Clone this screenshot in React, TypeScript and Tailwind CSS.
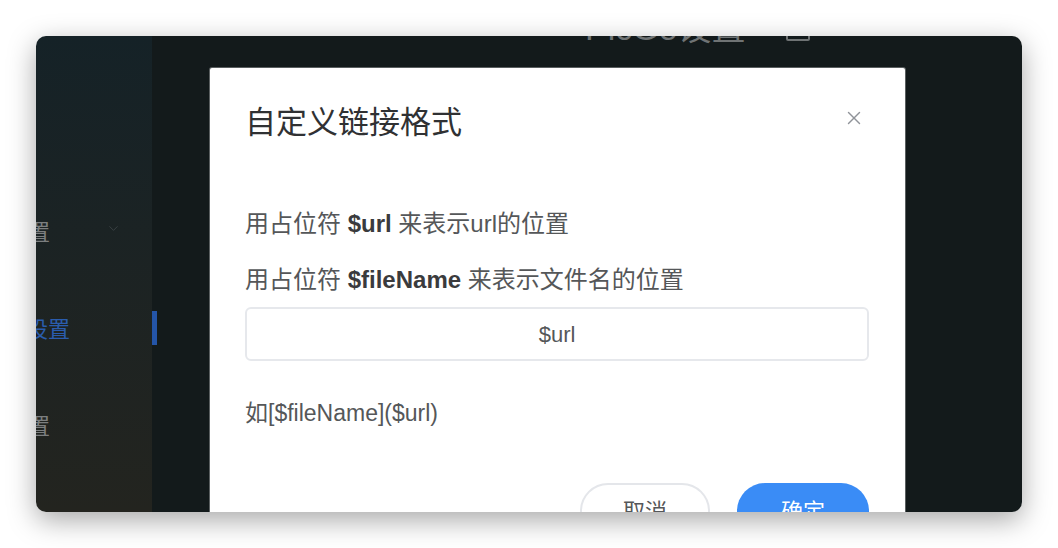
import { X, ChevronDown } from 'lucide-react';

const font = { fontFamily: '"Liberation Sans", "Noto Sans CJK SC", sans-serif' };

function SideItem({ label, offset, active }: { label: string; offset: string; active?: boolean }) {
  return (
    <div className={`h-[97px] flex items-center whitespace-nowrap text-[22px] ${active ? 'text-[#2a5cad]' : 'text-[#7c7f80]'}`}>
      <span className={offset}>{label}</span>
    </div>
  );
}

export default function App() {
  return (
    <div className="w-[1058px] h-[548px] bg-white p-[36px]" style={font}>
      <div className="relative w-[986px] h-[476px] rounded-[10px] overflow-hidden flex shadow-[0_8px_28px_rgba(0,0,0,0.35)]">
        <aside className="relative w-[116px] shrink-0 bg-linear-to-b from-[#152227] to-[#23241f] overflow-hidden pt-[148px]">
          <SideItem label="图床设置" offset="ml-[-74px]" />
          <SideItem label="图床设置" offset="ml-[-54px]" active />
          <SideItem label="软件设置" offset="ml-[-74px]" />
          <ChevronDown className="absolute left-[70px] top-[185px] text-[#3b4244]" size={15} strokeWidth={1.5} />
        </aside>
        <div className="w-[5px] shrink-0 bg-[#131a1b] pt-[275px]">
          <div className="h-[34px] bg-[#2455a8]" />
        </div>
        <main className="flex-1 bg-[#131a1b]">
          <div className="flex items-center gap-[40px] -mt-[24px] ml-[428px] text-[#6f7374]">
            <span className="text-[34px] leading-[32px]">PicGo设置</span>
            <span className="w-[24px] h-[26px] border-2 border-[#6f7374] rounded-[2px]" />
          </div>
        </main>

        <div className="absolute left-[174px] top-[32px] w-[695px] h-[480px] bg-white ring-1 ring-[#5a5f60] rounded-t-[2px] pl-[35px] pr-[36px] pt-[34px]">
          <div className="flex items-center justify-between">
            <h2 className="text-[31px] leading-[42px] text-[#303133]">自定义链接格式</h2>
            <X className="text-[#909399] mr-[4px] -mt-[10px]" size={22} strokeWidth={1.5} />
          </div>
          <p className="mt-[65px] text-[24px] leading-[30px] text-[#555759]">
            用占位符 <b className="text-[#3a3b3d]">$url</b> 来表示url的位置
          </p>
          <p className="mt-[26px] text-[24px] leading-[30px] text-[#555759]">
            用占位符 <b className="text-[#3a3b3d]">$fileName</b> 来表示文件名的位置
          </p>
          <div className="mt-[12px] h-[54px] rounded-[6px] border-2 border-[#e6e8ec] flex items-center justify-center text-[22px] text-[#555759]">
            $url
          </div>
          <p className="mt-[37px] text-[23px] leading-[30px] text-[#555759]">如[$fileName]($url)</p>
          <div className="mt-[55px] flex justify-end gap-[27px]">
            <button className="w-[130px] h-[56px] rounded-full border-2 border-[#e4e6ea] text-[22px] text-[#555759]">取消</button>
            <button className="w-[132px] h-[56px] rounded-full bg-[#3a8cf6] text-[22px] text-white">确定</button>
          </div>
        </div>
      </div>
    </div>
  );
}
